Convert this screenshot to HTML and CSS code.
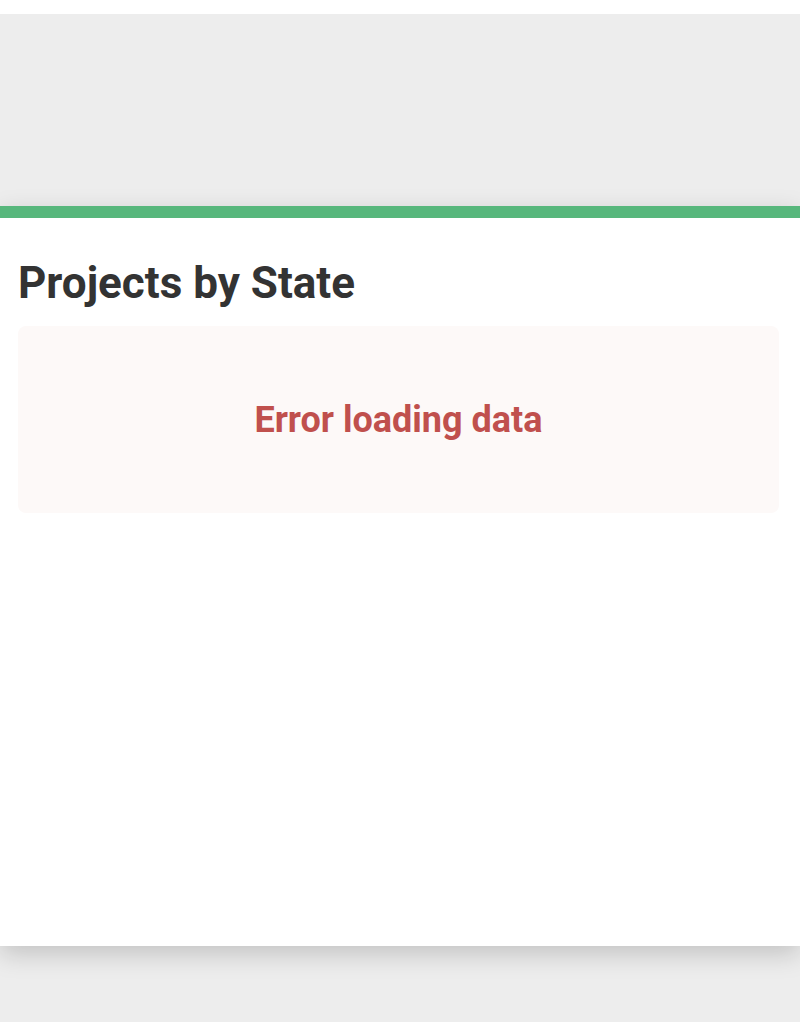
FILE: index.html
```html
<!DOCTYPE html>
<html lang="en">

<head>
    <meta charset="UTF-8">
    <meta name="viewport" content="width=device-width, initial-scale=1.0">
    <title>Projects by State</title>
    <link rel="stylesheet" href="styles.css">
</head>

<body>
    <div class="top-strip"></div>
    <header class="banner"></header>
    <main class="card">
        <h2>Projects by State</h2>
        <div class="error-box">
            <p class="error">Error loading data</p>
        </div>
    </main>
</body>

</html>
```

FILE: styles.css
```css
* {
    margin: 0;
    padding: 0;
    box-sizing: border-box;
    font-family: Roboto, "Liberation Sans", sans-serif;
}

body {
    background: #ededed;
    min-height: 100vh;
}

.top-strip {
    height: 14px;
    background: #ffffff;
}

.banner {
    height: 192px;
    background: #ededed;
}

.card {
    position: relative;
    background: white;
    border-top: 12px solid #57b77c;
    height: 740px;
    padding: 37px 21px 0 18px;
    box-shadow: 0 8px 24px rgba(0, 0, 0, 0.18);
}

h2 {
    font-size: 44px;
    font-weight: 700;
    color: #333;
    line-height: 56px;
    margin-bottom: 15px;
}

.error-box {
    background: #fdf9f8;
    border-radius: 8px;
    height: 187px;
    display: flex;
    justify-content: center;
    align-items: center;
}

.error {
    color: #c0504d;
    font-size: 36px;
    font-weight: 700;
}
```
